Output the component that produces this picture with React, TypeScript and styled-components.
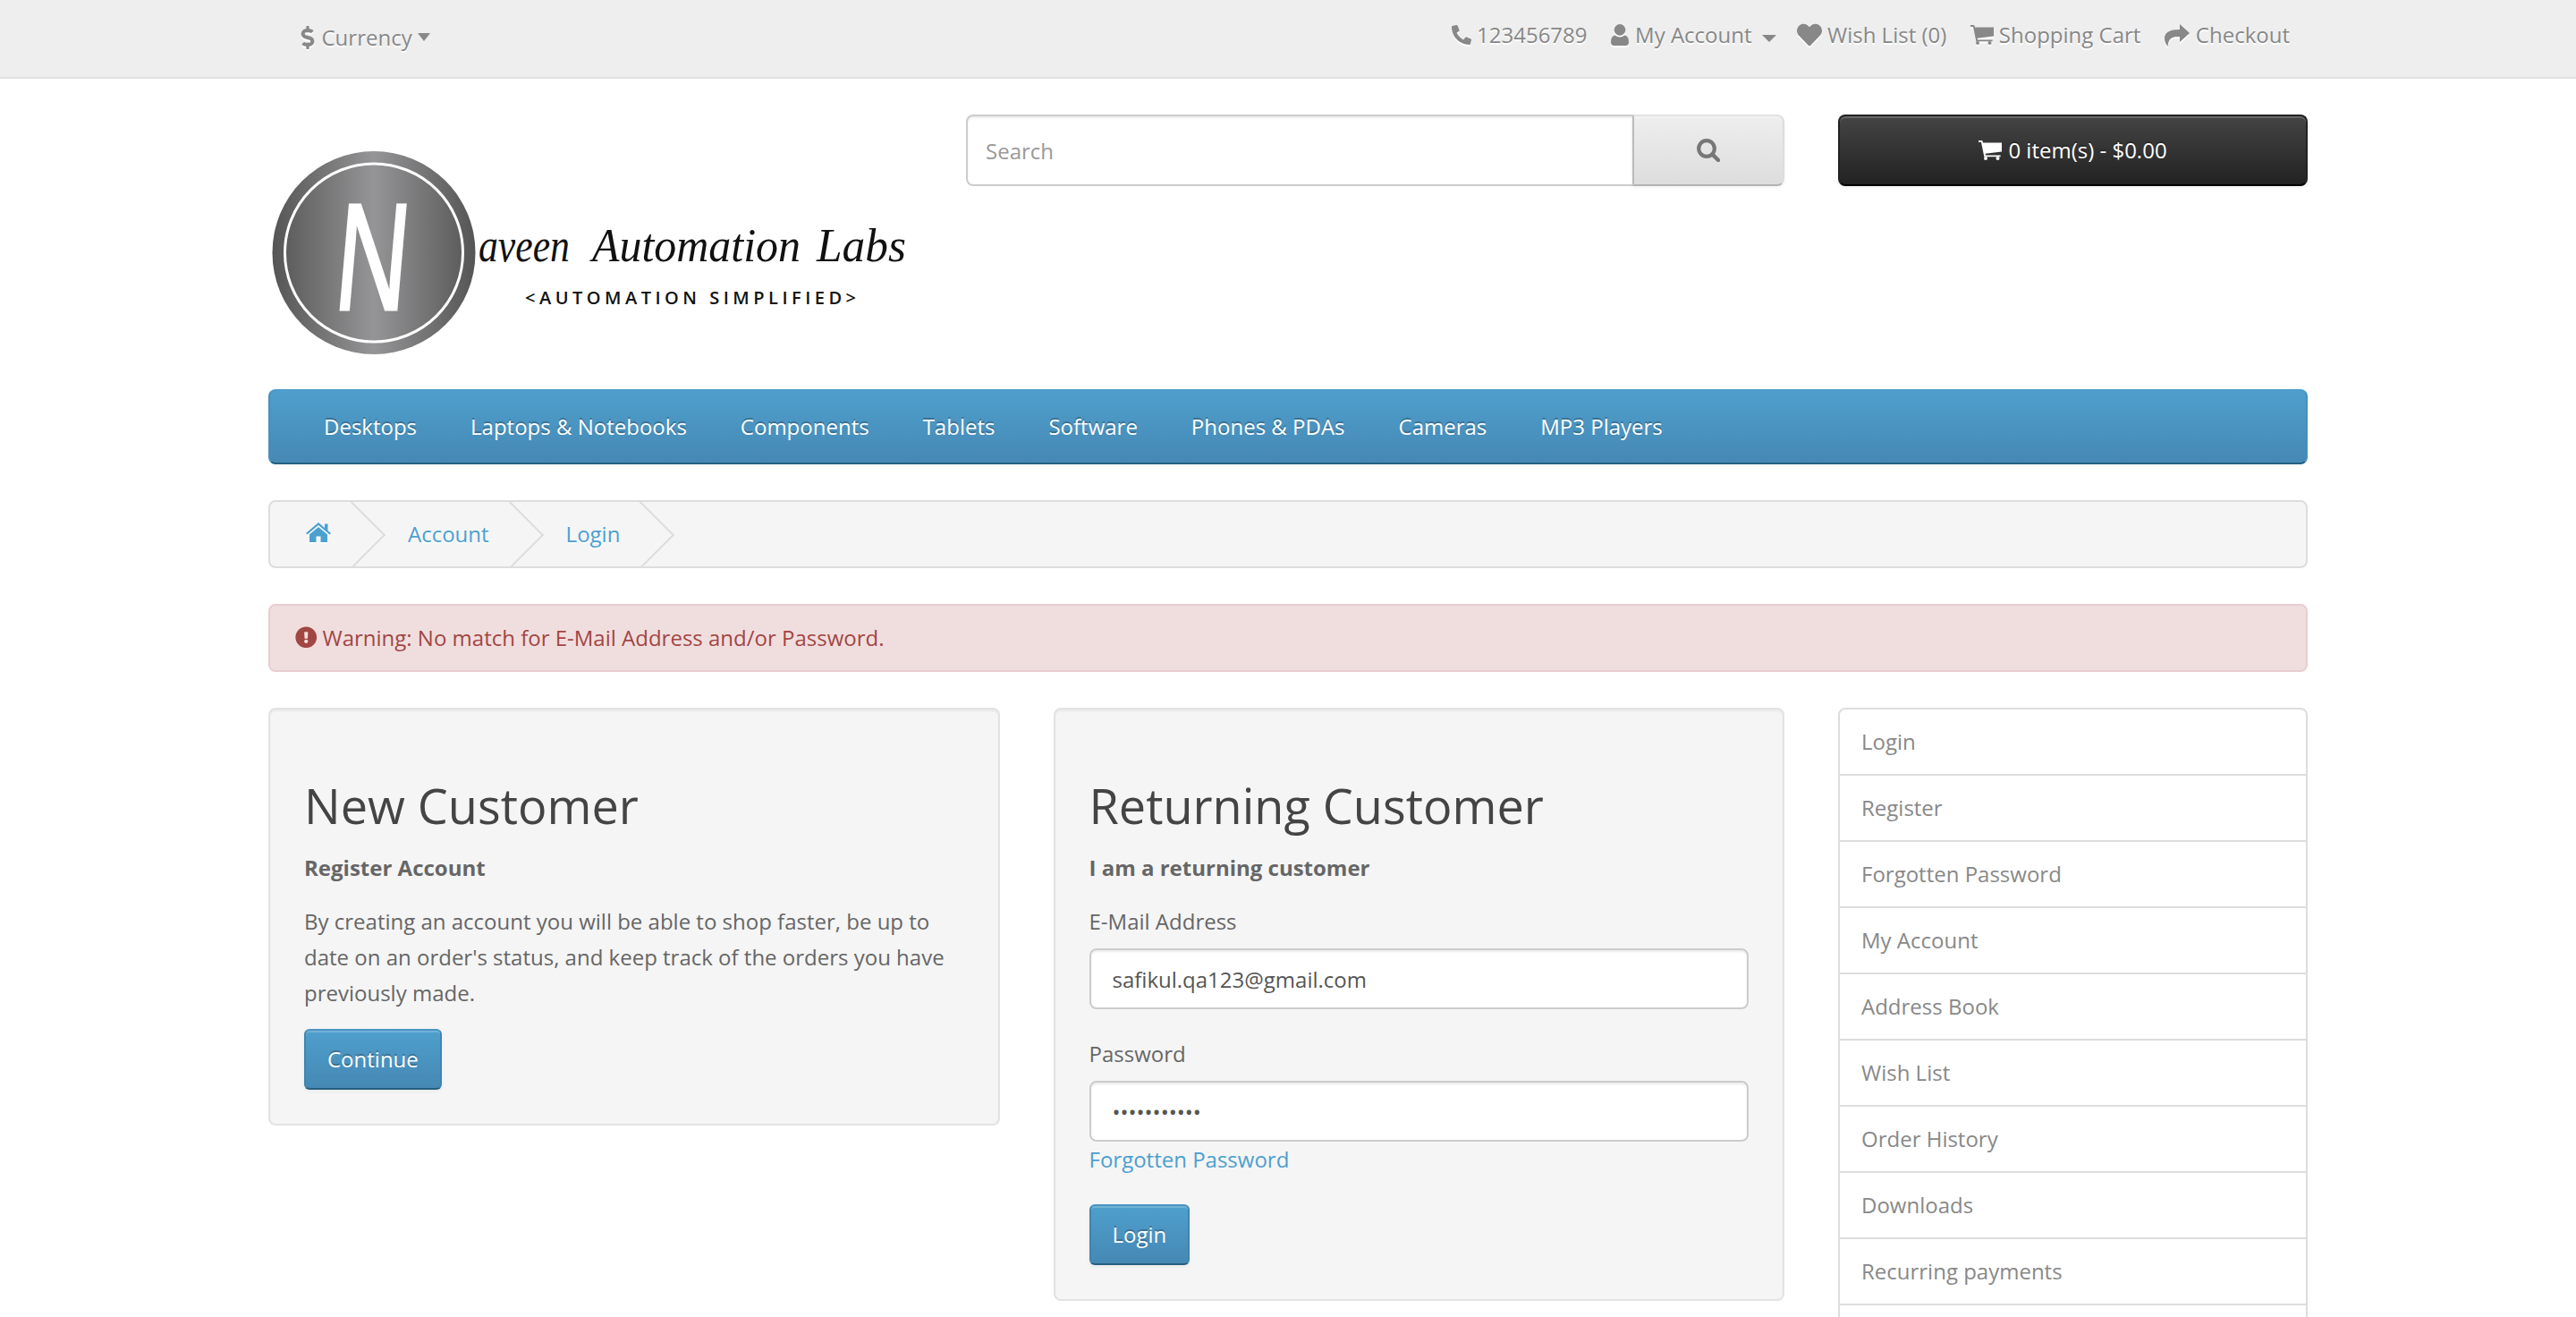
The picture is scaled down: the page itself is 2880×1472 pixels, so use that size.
import React from "react";
import styled, { createGlobalStyle } from "styled-components";
import { FaDollarSign, FaPhoneAlt, FaHeart, FaExclamationCircle } from "react-icons/fa";

const Global = createGlobalStyle`
  html, body { margin: 0; padding: 0; height: 100%; overflow: hidden; background: #fff; }
  body { font-family: "Open Sans", sans-serif; font-size: 24px; line-height: 40px; color: #666; }
  * { box-sizing: border-box; }
`;

const Page = styled.div`height: 1472px; overflow: hidden;`;
const Container = styled.div`width: 2340px; margin: 0 auto; padding: 0 30px;`;

const TopBar = styled.div`
  height: 88px; background: #eee; border-bottom: 2px solid #e2e2e2; margin-bottom: 40px;
`;
const TopInner = styled(Container)`
  display: flex; justify-content: space-between; align-items: center; height: 78px; color: #888; text-shadow: 0 2px 0 #fff;
`;
const CurrencyBtn = styled.div`display: flex; align-items: center; padding-left: 31px; margin-top: 5px;`;
const CurrencyIcon = styled(FaDollarSign)`font-size: 26px; margin-right: 2.5px; filter: drop-shadow(0 2px 0 #fff);`;
const CaretFa = styled.span`
  display: inline-block; width: 0; height: 0; margin-left: 6px; margin-top: -1px;
  border-left: 7.5px solid transparent; border-right: 7.5px solid transparent; border-top: 9px solid #888;
`;
const Links = styled.ul`display: flex; gap: 26.5px; margin: 0; padding: 0 20px 0 0; list-style: none;`;
const LinkItem = styled.li`display: flex; align-items: center; color: #888;`;
const LinkIcon = styled.span<{ $size: number; $gap: number }>`
  display: inline-flex; margin-right: ${(p) => p.$gap}px; font-size: ${(p) => p.$size}px; filter: drop-shadow(0 2px 0 #fff);
`;
const Caret = styled.span`
  display: inline-block; width: 0; height: 0; margin: 7px -3px 0 11px;
  border-left: 8px solid transparent; border-right: 8px solid transparent; border-top: 8px solid #888;
`;

const HeaderRow = styled.header`display: grid; grid-template-columns: 720px 915px 525px; column-gap: 60px;`;
const LogoBox = styled.div`margin-bottom: 10px; height: 297px;`;
const LogoSvg = styled.svg`display: block;`;
const SearchGroup = styled.div`display: flex; height: 80px;`;
const SearchInput = styled.input`
  flex: 1; min-width: 0; height: 80px; padding: 0 20px; font: 24px/40px "Open Sans", sans-serif; color: #555; background: #fff;
  border: 2px solid #ccc; border-right: 0; border-radius: 8px 0 0 8px; box-shadow: inset 0 2px 2px rgba(0,0,0,.075); outline: none;
  &::placeholder { color: #999; opacity: 1; }
`;
const SearchBtn = styled.button`
  width: 170px; height: 80px; display: flex; align-items: center; justify-content: center; padding: 0;
  background: linear-gradient(to bottom, #eee, #ddd); color: #777;
  border: 2px solid; border-color: #e2e2e2 #ddd #b3b3b3 #bbb; border-radius: 0 8px 8px 0; box-shadow: inset 0 2px 0 rgba(255,255,255,.2), 0 2px 4px rgba(0,0,0,.05);
`;
const CartBtn = styled.button`
  width: 100%; height: 80px; display: flex; align-items: center; justify-content: center; gap: 7px;
  font: 24px/40px "Open Sans", sans-serif; color: #fff; text-shadow: 0 -2px 0 rgba(0,0,0,.25);
  background: linear-gradient(to bottom, #444, #222); border: 2px solid; border-color: #222 #222 #000; border-radius: 8px;
  box-shadow: inset 0 2px 0 rgba(255,255,255,.2), 0 2px 4px rgba(0,0,0,.05);
`;

const Nav = styled.nav`
  height: 84px; margin-bottom: 40px; padding-left: 30px; display: flex; border: 2px solid; border-color: #4a9bcb #4790bc #24607f;
  border-radius: 8px; background: linear-gradient(to bottom, #4e9fcd, #4688b4);
`;
const NavLink = styled.a`
  padding: 20px 30px; color: #fff; text-shadow: 0 -2px 0 rgba(0,0,0,.25); white-space: nowrap;
`;

const Crumbs = styled.ul`
  display: flex; height: 76px; margin: 0 0 40px; padding: 0; list-style: none; background: #f5f5f5; border: 2px solid #ddd; border-radius: 8px; overflow: hidden;
`;
const Crumb = styled.li`
  position: relative; padding: 0 40px; margin-right: 6px; display: flex; align-items: center; color: #4ca0d0; text-shadow: 0 2px 0 #fff; white-space: nowrap;
  &::after {
    content: ""; position: absolute; top: 10px; right: -10px; width: 52px; height: 52px;
    border-right: 2px solid #ddd; border-bottom: 2px solid #ddd; transform: rotate(-45deg);
  }
`;
const HomeWrap = styled.span`display: inline-flex; margin-top: -4px; filter: drop-shadow(0 2px 0 #fff);`;

const Alert = styled.div`
  height: 76px; margin-bottom: 40px; padding: 16px 28px; display: flex; align-items: center; gap: 6px;
  background: #f0dedf; border: 2px solid #e9ccd1; border-radius: 8px; color: #a24643;
`;
const AlertIcon = styled(FaExclamationCircle)`font-size: 24.5px; margin-top: -2px;`;

const Main = styled.div`display: grid; grid-template-columns: 1695px 525px; column-gap: 60px; align-items: start;`;
const TwoCols = styled.div`display: grid; grid-template-columns: 817.5px 817.5px; column-gap: 60px; align-items: start;`;
const Well = styled.section`
  padding: 38px; background: #f5f5f5; border: 2px solid #e3e3e3; border-radius: 8px; box-shadow: inset 0 2px 2px rgba(0,0,0,.05);
`;
const Heading = styled.h2`margin: 40px 0 20px; font-size: 54px; line-height: 59.4px; font-weight: 400; color: #444;`;
const Para = styled.p`margin: 0 0 20px;`;
const Strong = styled.strong`font-weight: 700;`;
const PrimaryBtn = styled.button`
  display: inline-block; height: 68px; padding: 0 24px; font: 24px/34px "Open Sans", sans-serif; color: #fff; text-shadow: 0 -2px 0 rgba(0,0,0,.25);
  background: linear-gradient(to bottom, #4e9fcd, #4688b4); border: 2px solid; border-color: #4a95c2 #4085ae #25607f; border-radius: 6px;
  box-shadow: inset 0 2px 0 rgba(255,255,255,.2), 0 2px 4px rgba(0,0,0,.05);
`;
const FormGroup = styled.div`margin-bottom: 30px;`;
const Label = styled.label`display: block; margin-bottom: 10px;`;
const Field = styled.input`
  display: block; width: 100%; height: 68px; padding: 12px 24px; font: 24px/34px "Open Sans", sans-serif; color: #555; background: #fff;
  border: 2px solid #ccc; border-radius: 8px; box-shadow: inset 0 2px 2px rgba(0,0,0,.075); outline: none;
`;
const TextLink = styled.a`display: block; color: #4ca0d0;`;

const SideList = styled.div`display: flex; flex-direction: column;`;
const SideItem = styled.a`
  display: block; min-height: 76px; padding: 16px 24px; margin-bottom: -2px; color: #888; background: #fff; border: 2px solid #ddd;
  &:first-child { border-radius: 8px 8px 0 0; }
`;

const UserIcon = () => (
  <svg width="20" height="24" viewBox="0 0 20 24" fill="currentColor">
    <circle cx="10" cy="6.4" r="6.3" />
    <path d="M4.6 12.4Q10 16.4 15.4 12.4Q20 13 20 20Q20 24 16.5 24H3.5Q0 24 0 20Q0 13 4.6 12.4Z" />
  </svg>
);
const CartIcon = () => (
  <svg width="26" height="22" viewBox="0 0 26 22" fill="currentColor">
    <path d="M0 0H4.2L5 2.6H26V12.6L7.6 14.8L8.1 16.4H24.6V18.3H6.3L3 1.9H0Z" />
    <circle cx="8" cy="20" r="2" />
    <circle cx="21.5" cy="20" r="2" />
  </svg>
);
const ShareIcon = () => (
  <svg width="28" height="25" viewBox="0 0 28 25" fill="currentColor">
    <path d="M17 0L28 10L17 20V14C9 13.5 4 15.5 3.6 25C1.2 22 0 19 0 16C0 9 6 6 17 6Z" />
  </svg>
);
const HomeIcon = () => (
  <svg width="28" height="22" viewBox="0 0 28 22" fill="currentColor">
    <path d="M14 0L21 6V1.5H24.5V9L28 12L26.5 13.6L14 3L1.5 13.6L0 12Z" />
    <path d="M14 5L24 13.2V22H16.5V15.5H11.5V22H4V13.2Z" />
  </svg>
);
const SearchIcon = () => (
  <svg width="26" height="26" viewBox="0 0 26 26" fill="none" stroke="currentColor">
    <circle cx="11" cy="11" r="8.8" strokeWidth="4.2" />
    <path d="M17.6 17.6L24 24" strokeWidth="4.4" strokeLinecap="round" />
  </svg>
);

const Logo = () => (
  <LogoSvg width="720" height="297" viewBox="0 0 720 297">
    <defs>
      <linearGradient id="metal" x1="0" x2="1" y1="0" y2="0">
        <stop offset="0" stopColor="#555" />
        <stop offset="0.5" stopColor="#959597" />
        <stop offset="1" stopColor="#555" />
      </linearGradient>
    </defs>
    <circle cx="118" cy="154.5" r="113.5" fill="url(#metal)" />
    <circle cx="118" cy="154.5" r="99.5" fill="none" stroke="#fff" strokeWidth="3" />
    <text transform="translate(112 218) skewX(-5) scale(.66 1)" textAnchor="middle" fontFamily="'Liberation Sans', sans-serif" fontSize="170" fill="#fff" stroke="#fff" strokeWidth="3">N</text>
    <g fontFamily="'Liberation Serif', serif" fontStyle="italic" fontSize="52" fill="#111">
      <text x="235" y="164" textLength="102" lengthAdjust="spacingAndGlyphs">aveen</text>
      <text x="362" y="164" textLength="233" lengthAdjust="spacingAndGlyphs">Automation</text>
      <text x="613" y="164" textLength="100" lengthAdjust="spacingAndGlyphs">Labs</text>
    </g>
    <text x="287" y="212" fontFamily="'Open Sans', sans-serif" fontWeight="600" fontSize="20" fill="#111" textLength="370">&lt;AUTOMATION SIMPLIFIED&gt;</text>
  </LogoSvg>
);

const navItems = ["Desktops", "Laptops & Notebooks", "Components", "Tablets", "Software", "Phones & PDAs", "Cameras", "MP3 Players"];
const sideItems = ["Login", "Register", "Forgotten Password", "My Account", "Address Book", "Wish List", "Order History", "Downloads", "Recurring payments", ""];

export default function App() {
  return (
    <Page>
      <Global />
      <TopBar>
        <TopInner>
          <CurrencyBtn><CurrencyIcon />Currency<CaretFa /></CurrencyBtn>
          <Links>
            <LinkItem><LinkIcon $size={22} $gap={6}><FaPhoneAlt /></LinkIcon>123456789</LinkItem>
            <LinkItem><LinkIcon $size={24} $gap={7}><UserIcon /></LinkIcon>My Account<Caret /></LinkItem>
            <LinkItem><LinkIcon $size={28} $gap={6}><FaHeart /></LinkIcon>Wish List (0)</LinkItem>
            <LinkItem><LinkIcon $size={24} $gap={6}><CartIcon /></LinkIcon>Shopping Cart</LinkItem>
            <LinkItem><LinkIcon $size={24} $gap={7}><ShareIcon /></LinkIcon>Checkout</LinkItem>
          </Links>
        </TopInner>
      </TopBar>
      <Container>
        <HeaderRow>
          <LogoBox><Logo /></LogoBox>
          <SearchGroup>
            <SearchInput placeholder="Search" />
            <SearchBtn><SearchIcon /></SearchBtn>
          </SearchGroup>
          <CartBtn><CartIcon />0 item(s) - $0.00</CartBtn>
        </HeaderRow>
        <Nav>
          {navItems.map((n) => <NavLink key={n}>{n}</NavLink>)}
        </Nav>
        <Crumbs>
          <Crumb><HomeWrap><HomeIcon /></HomeWrap></Crumb>
          <Crumb>Account</Crumb>
          <Crumb>Login</Crumb>
        </Crumbs>
        <Alert><AlertIcon />Warning: No match for E-Mail Address and/or Password.</Alert>
        <Main>
          <TwoCols>
            <Well>
              <Heading>New Customer</Heading>
              <Para><Strong>Register Account</Strong></Para>
              <Para>By creating an account you will be able to shop faster, be up to date on an order's status, and keep track of the orders you have previously made.</Para>
              <PrimaryBtn>Continue</PrimaryBtn>
            </Well>
            <Well>
              <Heading>Returning Customer</Heading>
              <Para><Strong>I am a returning customer</Strong></Para>
              <FormGroup>
                <Label>E-Mail Address</Label>
                <Field type="text" defaultValue="safikul.qa123@gmail.com" />
              </FormGroup>
              <FormGroup>
                <Label>Password</Label>
                <Field type="password" defaultValue="safikul1234" />
                <TextLink>Forgotten Password</TextLink>
              </FormGroup>
              <PrimaryBtn>Login</PrimaryBtn>
            </Well>
          </TwoCols>
          <SideList>
            {sideItems.map((s, i) => <SideItem key={i}>{s}</SideItem>)}
          </SideList>
        </Main>
      </Container>
    </Page>
  );
}
